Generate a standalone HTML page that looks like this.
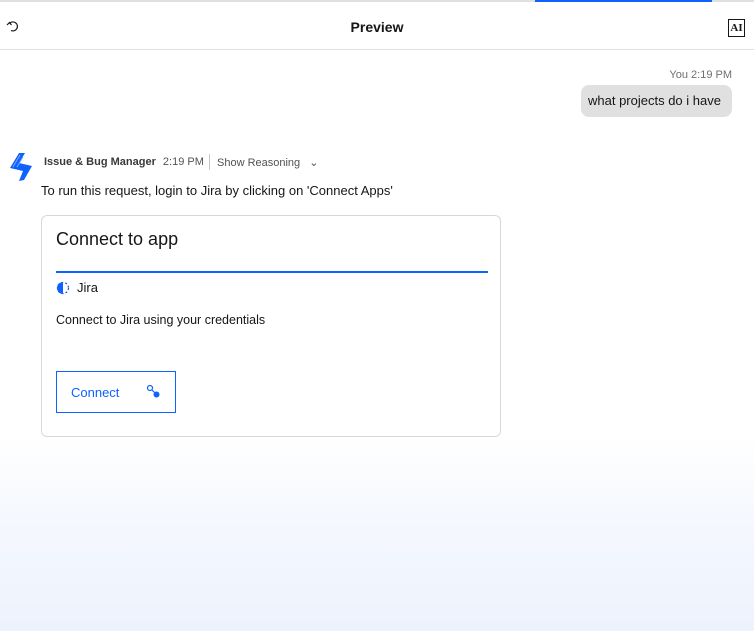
<!DOCTYPE html>
<html><head><meta charset="utf-8"><style>
*{box-sizing:border-box;margin:0;padding:0}
body{width:754px;height:631px;overflow:hidden;font-family:"Liberation Sans",sans-serif;color:#161616;position:relative;background:linear-gradient(to bottom,#fff 0,#fff 435px,#f5f8fe 520px,#edf2fd 631px)}
.top{position:absolute;top:0;left:0;width:754px;height:50px;border-top:2px solid #e0e0e0;border-bottom:1px solid #e0e0e0;background:#fff}
.blue{position:absolute;top:-2px;left:535px;width:177px;height:2px;background:#0f62fe}
.title{position:absolute;left:0;width:754px;top:17px;text-align:center;font-size:14px;font-weight:bold}
.ai{position:absolute;left:728px;top:17px;width:17px;height:18px;border:1px solid #161616;font-family:"Liberation Serif",serif;font-size:11px;font-weight:bold;text-align:center;line-height:16px}
.abs{position:absolute}
</style></head><body>
<div class="top"><div class="blue"></div>
<svg class="abs" style="left:6px;top:17px" width="14" height="14" viewBox="0 0 14 14"><path d="M3.5 4.5 A4.5 4.5 0 1 1 5 11.5" fill="none" stroke="#161616" stroke-width="1.2"/><path d="M1 6 L3.5 3.5 L5.5 6" fill="none" stroke="#161616" stroke-width="1.2"/></svg>
<div class="title">Preview</div><div class="ai">AI</div></div>
<div class="abs" style="right:22px;top:69px;font-size:11px;color:#6f6f6f">You 2:19 PM</div>
<div class="abs" style="left:581px;top:85px;width:151px;height:32px;background:#e0e0e0;border-radius:8px;font-size:13px;line-height:32px;padding-left:7px">what projects do i have</div>
<svg class="abs" style="left:8px;top:152px" width="26" height="30" viewBox="0 0 26 30"><path d="M11 1 L17 1 L11 11 L24 14 L16 28 L11 29 L15 19 L2 16 Z" fill="#0f62fe"/><path d="M5 15 L12 3 M9 15 L15 5" stroke="#78a9ff" stroke-width="1"/></svg>
<div class="abs" style="left:44px;top:156px;font-size:11px;color:#393939;font-weight:600">Issue &amp; Bug Manager <span style="font-weight:normal;color:#525252;margin-left:4px">2:19 PM</span></div>
<div class="abs" style="left:209px;top:154px;width:1px;height:16px;background:#c6c6c6"></div>
<div class="abs" style="left:217px;top:156px;font-size:11px;color:#525252">Show Reasoning <span style="margin-left:6px">&#8964;</span></div>
<div class="abs" style="left:41px;top:183px;font-size:13px">To run this request, login to Jira by clicking on 'Connect Apps'</div>
<div class="abs" style="left:41px;top:215px;width:460px;height:222px;border:1px solid #d8d8d8;border-radius:6px;background:#fff"></div>
<div class="abs" style="left:56px;top:229px;font-size:18px">Connect to app</div>
<div class="abs" style="left:56px;top:271px;width:432px;height:2px;background:#0f62fe"></div>
<svg class="abs" style="left:56px;top:281px" width="14" height="14" viewBox="0 0 14 14"><path d="M7 1 A6 6 0 0 0 7 13 Z" fill="#0f62fe"/><circle cx="7" cy="7" r="5.5" fill="none" stroke="#0f62fe" stroke-width="1.3" stroke-dasharray="2 2"/></svg>
<div class="abs" style="left:77px;top:280px;font-size:13px">Jira</div>
<div class="abs" style="left:56px;top:313px;font-size:12.5px">Connect to Jira using your credentials</div>
<div class="abs" style="left:56px;top:371px;width:120px;height:42px;border:1px solid #0f62fe"></div>
<div class="abs" style="left:71px;top:385px;font-size:13px;color:#0f62fe">Connect</div>
<svg class="abs" style="left:146px;top:384px" width="16" height="16" viewBox="0 0 16 16"><circle cx="4" cy="4" r="2.5" fill="none" stroke="#0f62fe" stroke-width="1.2"/><line x1="6" y1="6" x2="9" y2="9" stroke="#0f62fe" stroke-width="1.2"/><circle cx="10.5" cy="10.5" r="3" fill="#0f62fe"/></svg>
</body></html>
